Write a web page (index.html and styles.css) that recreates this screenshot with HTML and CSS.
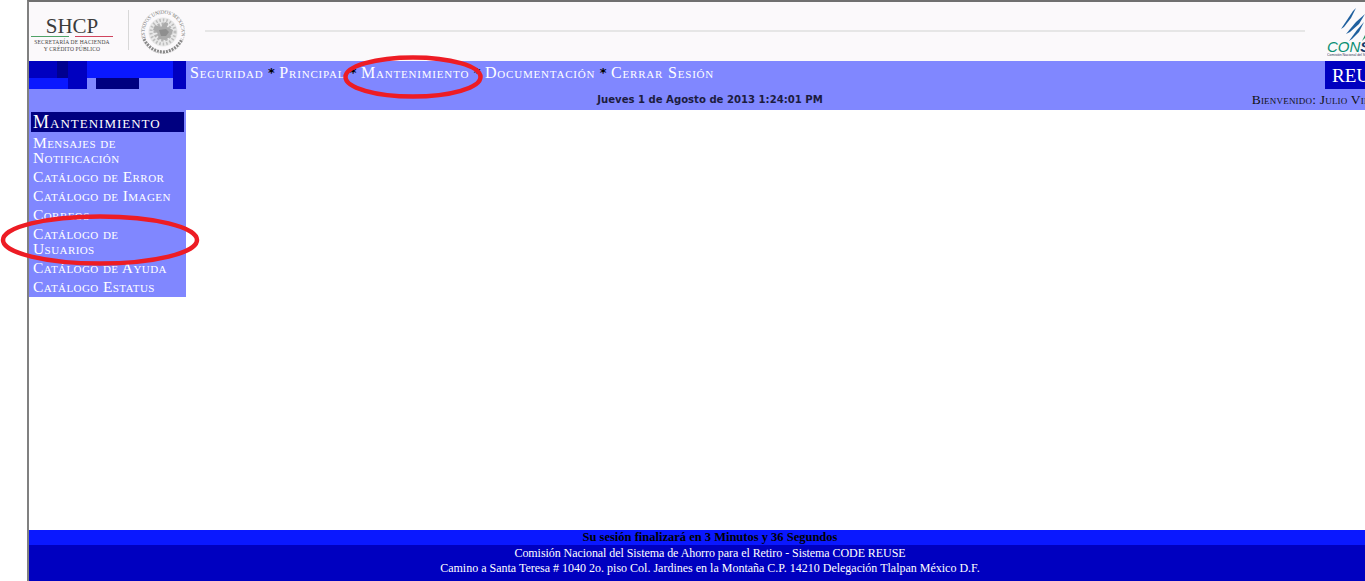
FILE: index.html
```html
<!DOCTYPE html>
<html lang="es">
<head>
<meta charset="utf-8">
<title>Sistema CODE REUSE</title>
<link rel="stylesheet" href="styles.css">
</head>
<body>
<div class="page">
  <header class="top">
    <div class="shcp">
      <div class="shcp-name">SHCP</div>
      <div class="shcp-rule"><i class="green"></i><i class="red"></i></div>
      <div class="shcp-sub">SECRETARÍA DE HACIENDA</div>
      <div class="shcp-sub">Y CRÉDITO PÚBLICO</div>
    </div>
    <div class="divider"></div>
    <svg class="seal" width="48" height="48" viewBox="0 0 48 48">
      <defs><path id="sealArc" d="M6.5 30A18.5 18.5 0 1 1 42 29"/></defs>
      <text class="seal-text"><textPath href="#sealArc">ESTADOS UNIDOS MEXICANOS</textPath></text>
      <circle cx="24" cy="24" r="21.5" fill="none" stroke="#cfcfcf" stroke-width="1" stroke-dasharray="1.5 1"/>
      <circle cx="24" cy="24" r="14.5" fill="#e8e8e8"/>
      <circle cx="24" cy="24" r="12" fill="none" stroke="#bdbdbd" stroke-width="3" stroke-dasharray="1.5 2"/>
      <circle cx="24" cy="24" r="7" fill="none" stroke="#b4b4b4" stroke-width="5" stroke-dasharray="2 1.5"/>
      <path d="M16 17l6 2 4-5 3 1-1 4 6 3-3 7-5 3-6-1-2-7-4-2Z" fill="#ababab"/>
      <path d="M20 22l7-1 3 3-3 4-5 0Z" fill="#8e8e8e"/>
      <path d="M5 31Q11 43 24 44Q37 43 43 31" fill="none" stroke="#8a8a8a" stroke-width="3" stroke-dasharray="2 1"/>
    </svg>
    <div class="top-line"></div>
    <div class="consar">
      <svg class="consar-mark" width="38" height="36" viewBox="0 0 38 36">
        <path d="M1 24L13 6 16 3 11 13 4 22Z" fill="#1f5f9e"/>
        <path d="M6 29L16 17 25 9 19 19 10 27Z" fill="#1f5f9e"/>
        <path d="M9 36L17 25 24 17 19 27 12 34Z" fill="#1f5f9e"/>
        <path d="M22 36L27 26 33 20 29 29Z" fill="#1a8f5f"/>
      </svg>
      <div class="consar-name"><span class="con">CON</span><span class="sar">SAR</span></div>
      <div class="consar-sub">Comisión Nacional del Sistema de Ahorro</div>
    </div>
  </header>

  <nav class="nav">
    <div class="nav-main">
      <svg class="blocks" width="157" height="28" viewBox="0 0 157 28">
        <rect width="28" height="17" fill="#0000c0"/>
        <rect x="28" width="11" height="17" fill="#000090"/>
        <rect x="39" width="19" height="28" fill="#0000c0"/>
        <rect x="58" width="86" height="17" fill="#0a18ff"/>
        <rect x="144" width="13" height="28" fill="#0000c0"/>
        <rect y="17" width="39" height="11" fill="#0a18ff"/>
        <rect x="67" y="17" width="43" height="11" fill="#000080"/>
      </svg>
      <div class="menu">
        <a>Seguridad</a><b>*</b><a>Principal</a><b>*</b><a>Mantenimiento</a><b>*</b><a>Documentación</a><b>*</b><a>Cerrar Sesión</a>
      </div>
      <div class="reuse">REUSE</div>
    </div>
    <div class="nav-info">
      <div></div>
      <div class="date">Jueves 1 de Agosto de 2013 1:24:01 PM</div>
      <div class="welcome">Bienvenido: Julio Vie</div>
    </div>
  </nav>

  <main class="body">
    <aside class="side">
      <h2 class="side-title">Mantenimiento</h2>
      <ul class="side-list">
        <li>Mensajes de Notificación</li>
        <li>Catálogo de Error</li>
        <li>Catálogo de Imagen</li>
        <li>Correos</li>
        <li>Catálogo de Usuarios</li>
        <li>Catálogo de Ayuda</li>
        <li>Catálogo Estatus</li>
      </ul>
    </aside>
  </main>

  <footer class="foot">
    <div class="session">Su sesión finalizará en 3 Minutos y 36 Segundos</div>
    <div class="legal">
      <div class="legal-name">Comisión Nacional del Sistema de Ahorro para el Retiro - Sistema CODE REUSE</div>
      <div>Camino a Santa Teresa # 1040 2o. piso Col. Jardines en la Montaña C.P. 14210 Delegación Tlalpan México D.F.</div>
    </div>
  </footer>
</div>
<svg class="mark mark-top" width="144" height="46" viewBox="0 0 144 46"><ellipse cx="72" cy="23" rx="67.5" ry="19.5"/></svg>
<svg class="mark mark-side" width="204" height="54" viewBox="0 0 204 54"><ellipse cx="102" cy="27" rx="97" ry="23.5"/></svg>
</body>
</html>
```
FILE: styles.css
```css
html, body {
  margin: 0;
  height: 100%;
  overflow: hidden;
  background: #fff;
}
.page {
  box-sizing: border-box;
  width: 1364px;
  height: 581px;
  margin-left: 27px;
  border-left: 2px solid #808080;
  border-top: 2px solid #707070;
  display: flex;
  flex-direction: column;
  font-family: "Liberation Serif", serif;
}
.top {
  height: 59px;
  flex: none;
  display: flex;
  background: #fbf9fb;
  position: relative;
}
.shcp {
  width: 86px;
  padding: 14px 0 0 0;
  margin-right: 13px;
  text-align: center;
  flex: none;
  color: #444;
}
.shcp-name {
  font-size: 21px;
  line-height: 20px;
  color: #3c3c3c;
}
.shcp-rule {
  display: flex;
  justify-content: space-between;
  margin: 0 2px 2px;
}
.shcp-rule i {
  display: block;
  width: 38px;
  height: 1px;
}
.green { background: #4fa266; }
.red { background: #d0445e; }
.shcp-sub {
  font-size: 5.5px;
  line-height: 6.5px;
  letter-spacing: .15px;
  white-space: nowrap;
}
.divider {
  width: 1px;
  height: 40px;
  margin-top: 8px;
  background: #d8d8d8;
  flex: none;
}
.seal {
  margin: 6px 0 0 10px;
  flex: none;
}
.seal-text {
  font: 5px "Liberation Serif", serif;
  fill: #777;
}
.top-line {
  width: 1100px;
  height: 2px;
  margin: 28px 0 0 18px;
  background: #e6e6e6;
  flex: none;
}
.consar {
  margin-left: 22px;
  width: 60px;
  flex: none;
  overflow: hidden;
  position: relative;
}
.consar-mark {
  display: block;
  margin: 3px 0 0 13px;
}
.consar-name {
  font: italic 15px/13px "Liberation Sans", sans-serif;
  white-space: nowrap;
  margin-top: -1px;
}
.con { color: #0a8f73; }
.sar { color: #153a6b; font-weight: 700; }
.consar-sub {
  font: 3.5px/4px "Liberation Sans", sans-serif;
  color: #335;
  white-space: nowrap;
}
.nav {
  height: 49px;
  flex: none;
  background: #8087ff;
  display: flex;
  flex-direction: column;
}
.nav-main {
  height: 28px;
  display: flex;
}
.blocks {
  display: block;
  flex: none;
}
.menu {
  width: 1139px;
  flex: none;
  box-sizing: border-box;
  padding: 3px 0 0 4px;
  display: flex;
  gap: 4.5px;
  align-items: flex-start;
  font-size: 16px;
  line-height: 18px;
  font-variant: small-caps;
  letter-spacing: .8px;
  color: #fff;
  white-space: nowrap;
}
.menu b {
  color: #000;
  font-family: "DejaVu Sans", sans-serif;
  font-size: 13px;
  letter-spacing: 0;
}
.reuse {
  width: 66px;
  flex: none;
  box-sizing: border-box;
  padding-left: 7px;
  background: #0000c0;
  color: #fff;
  font-size: 19px;
  line-height: 29px;
}
.nav-info {
  flex: 1;
  display: grid;
  grid-template-columns: 1fr auto 1fr;
  align-items: center;
}
.date {
  font: 700 10.1px "DejaVu Sans", sans-serif;
  color: #1c1c40;
  white-space: nowrap;
}
.welcome {
  margin-left: 429px;
  font-size: 13.5px;
  font-variant: small-caps;
  letter-spacing: .2px;
  color: #111;
  white-space: nowrap;
}
.body {
  flex: 1;
  display: flex;
  align-items: flex-start;
}
.side {
  width: 157px;
  box-sizing: border-box;
  padding: 2px 2px 1px;
  background: #8087ff;
}
.side-title {
  margin: 0;
  height: 20px;
  padding-left: 2px;
  background: #000080;
  color: #fff;
  font-size: 18px;
  line-height: 20px;
  font-weight: 400;
  font-variant: small-caps;
  letter-spacing: 1px;
  white-space: nowrap;
}
.side-list {
  list-style: none;
  margin: 1px 0 0;
  padding: 0 0 0 2px;
  color: #fff;
  font-size: 15.5px;
  line-height: 15px;
  font-variant: small-caps;
  letter-spacing: .42px;
}
.side-list li {
  padding: 2px 0;
  width: 142px;
}
.foot {
  flex: none;
  text-align: center;
  font-size: 12px;
  line-height: 15px;
}
.session {
  height: 15px;
  background: #0a18ff;
  color: #000;
  font-weight: 700;
  font-size: 12.5px;
}
.legal {
  height: 36px;
  padding-top: 1px;
  box-sizing: border-box;
  background: #0000c0;
  color: #fff;
  line-height: 15px;
}
.legal-name {
  letter-spacing: -.065px;
}
.mark {
  position: absolute;
  overflow: visible;
}
.mark ellipse {
  fill: none;
  stroke: #ed1c24;
  stroke-width: 4.5;
}
.mark-top { left: 341px; top: 54px; }
.mark-side { left: -2px; top: 213px; }
```
